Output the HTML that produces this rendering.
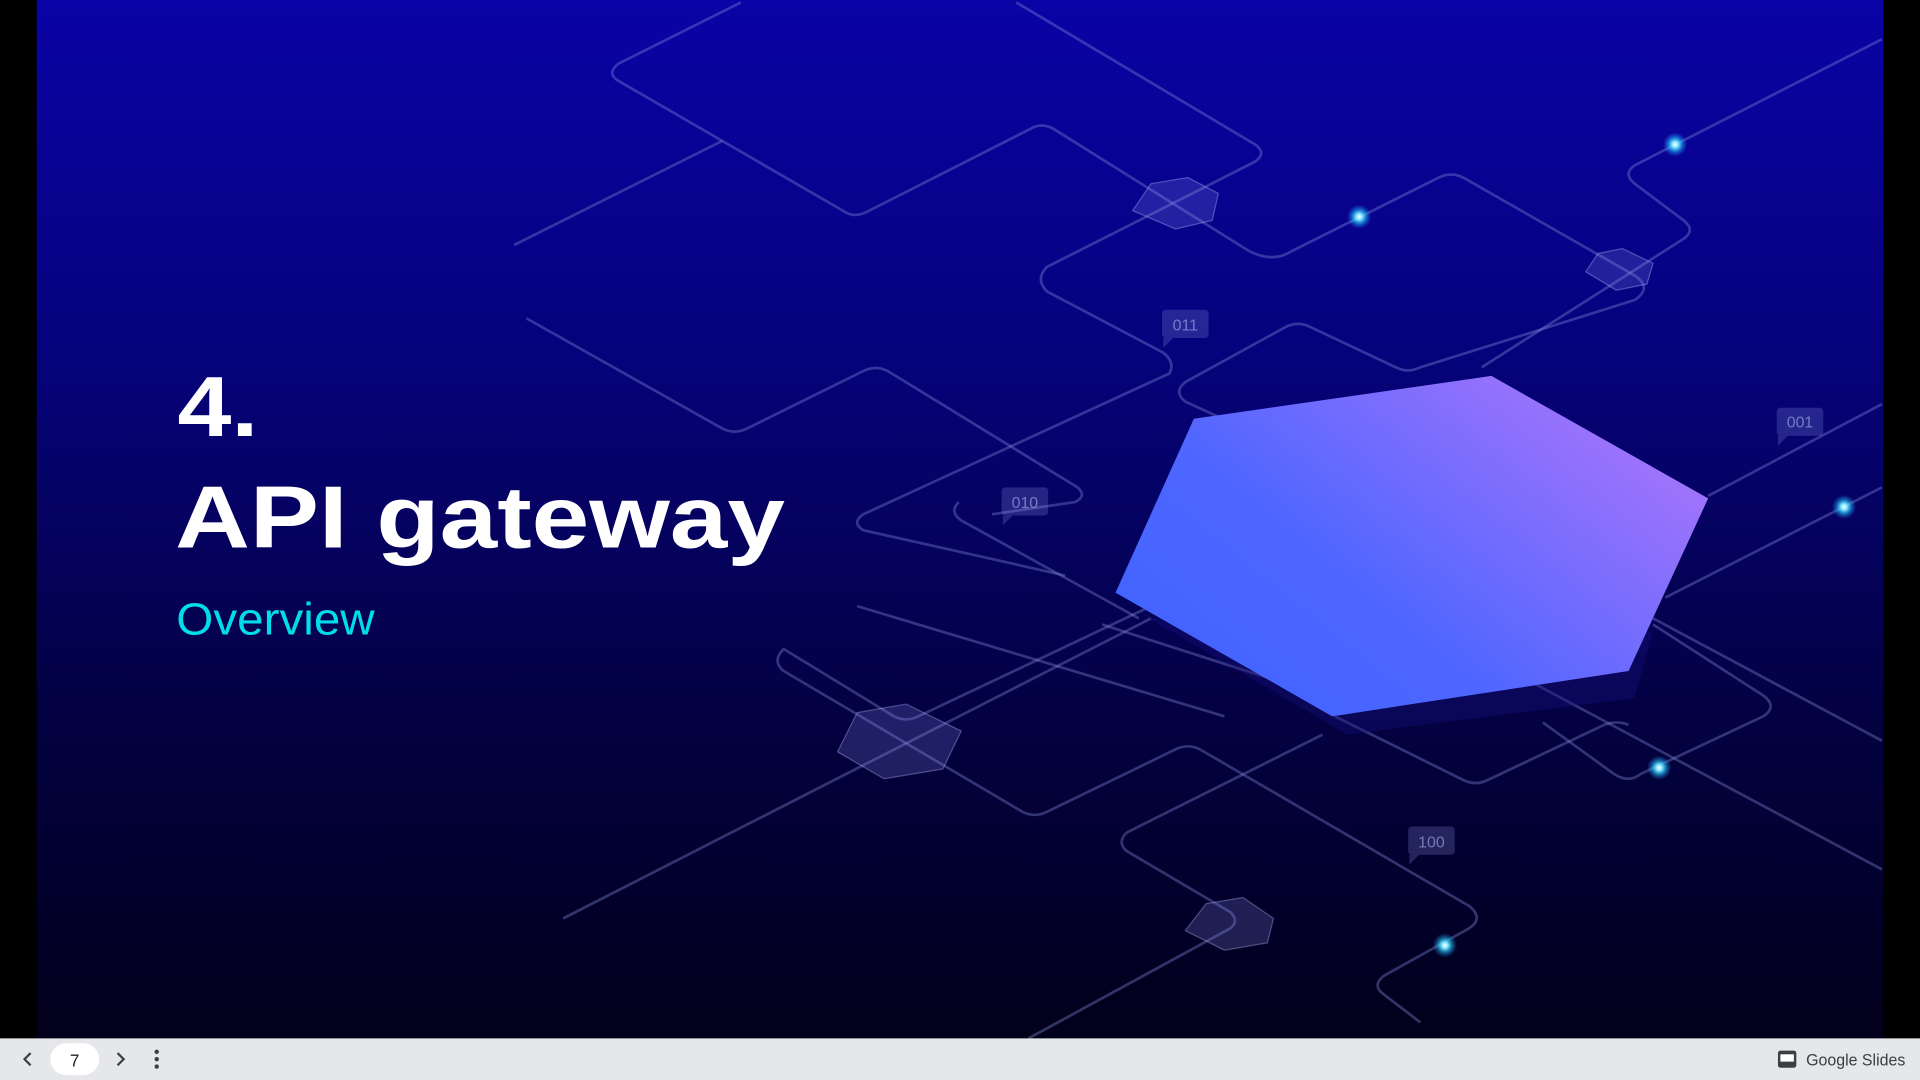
<!DOCTYPE html>
<html><head><meta charset="utf-8"><style>
html,body{margin:0;padding:0;width:1920px;height:1080px;overflow:hidden;background:#000}
svg{display:block}
</style></head><body>
<svg width="1920" height="1080" viewBox="0 0 1568 882" xmlns="http://www.w3.org/2000/svg">
<defs>
<linearGradient id="bg" x1="0" y1="0" x2="0" y2="1">
<stop offset="0" stop-color="#0a03a6"/>
<stop offset="0.35" stop-color="#06027a"/>
<stop offset="0.7" stop-color="#030140"/>
<stop offset="1" stop-color="#02001a"/>
</linearGradient>
<linearGradient id="hx" x1="0" y1="1" x2="1" y2="0.3">
<stop offset="0" stop-color="#3e63ff"/>
<stop offset="0.45" stop-color="#4e66ff"/>
<stop offset="1" stop-color="#a474fb"/>
</linearGradient>
<radialGradient id="gl">
<stop offset="0" stop-color="#ffffff"/>
<stop offset="0.25" stop-color="#7fe6ff"/>
<stop offset="0.6" stop-color="#1dc8ff" stop-opacity="0.5"/>
<stop offset="1" stop-color="#1d8cff" stop-opacity="0"/>
</radialGradient>
</defs>
<rect x="0" y="0" width="1568" height="882" fill="#000"/>
<rect x="30" y="0" width="1508" height="848" fill="url(#bg)"/>
<g fill="none" stroke="#8088d8" stroke-opacity="0.38" stroke-width="2.2" stroke-linejoin="round">
<path d="M605,2 L505,52 Q495,60 505,66 L690,173 Q698,178 708,173 L842,105 Q850,100 860,105 L1020,205 Q1040,215 1055,205 L1175,145 Q1185,140 1195,145 L1335,225 Q1350,235 1335,245 L1160,300 Q1150,305 1140,300 L1070,267 Q1060,262 1050,267 L968,312 Q958,320 968,328 L1005,345"/>
<path d="M830,2 L1025,118 Q1035,125 1025,132 L855,218 Q845,228 855,238 L950,288 Q960,296 955,305 L705,420 Q695,427 705,433 L870,470"/>
<path d="M1537,32 L1335,135 Q1325,142 1335,150 L1375,180 Q1385,188 1375,195 L1210,300"/>
<path d="M590,115 L420,200"/>
<path d="M880,398 Q888,405 878,410 L810,420"/>
<path d="M880,398 L725,303 Q715,298 705,303 L610,350 Q600,355 590,350 L430,260"/>
<path d="M783,410 Q775,418 785,425 L930,505"/>
<path d="M940,495 L750,585 Q740,590 730,585 L640,530 Q630,540 640,548 L835,663 Q845,668 855,663 L960,612 Q970,607 980,612 L1200,740 Q1212,750 1200,758 L1130,797 Q1120,805 1130,812 L1160,835"/>
<path d="M1537,330 L1395,405"/>
<path d="M1537,398 L1360,488"/>
<path d="M1537,605 L1350,505"/>
<path d="M1537,710 L1200,530"/>
<path d="M1350,510 L1440,568 Q1452,577 1440,585 L1340,632 Q1330,640 1318,632 L1260,590"/>
<path d="M1090,585 L1195,637 Q1205,642 1215,637 L1310,592 Q1320,588 1330,592"/>
<path d="M1000,585 L700,495"/>
<path d="M920,680 L1080,600"/>
<path d="M920,680 Q912,688 920,695 L1005,745 Q1012,752 1005,758 L840,848"/>
<path d="M460,750 L940,505"/>
<path d="M900,510 L1040,555"/>
</g>
<g fill="#8a8ef0" fill-opacity="0.22" stroke="#c0c4ff" stroke-opacity="0.35" stroke-width="1">
<polygon points="940,150 970,145 995,158 990,180 960,187 925,172"/>
<polygon points="1305,207 1325,203 1350,215 1345,232 1320,237 1295,222"/>
<polygon points="700,582 740,575 785,597 770,628 722,636 684,614"/>
<polygon points="985,738 1015,733 1040,750 1035,770 1000,776 968,760"/>
</g>
<g font-family="Liberation Sans, sans-serif" font-size="13" fill="#9aa0e0" fill-opacity="0.7">
<rect x="949" y="253" width="38" height="23" rx="3" fill="#8a90e0" fill-opacity="0.25"/><path d="M950,276 l0,8 l8,-8z" fill="#8a90e0" fill-opacity="0.25"/><text x="968" y="270" text-anchor="middle">011</text>
<rect x="818" y="398" width="38" height="23" rx="3" fill="#8a90e0" fill-opacity="0.25"/><path d="M819,421 l0,8 l8,-8z" fill="#8a90e0" fill-opacity="0.25"/><text x="837" y="415" text-anchor="middle">010</text>
<rect x="1451" y="333" width="38" height="23" rx="3" fill="#8a90e0" fill-opacity="0.25"/><path d="M1452,356 l0,8 l8,-8z" fill="#8a90e0" fill-opacity="0.25"/><text x="1470" y="349" text-anchor="middle">001</text>
<rect x="1150" y="675" width="38" height="23" rx="3" fill="#8a90e0" fill-opacity="0.25"/><path d="M1151,698 l0,8 l8,-8z" fill="#8a90e0" fill-opacity="0.25"/><text x="1169" y="692" text-anchor="middle">100</text>
</g>
<polygon points="930,500 1100,600 1335,570 1350,515 1100,560" fill="#1a1080" fill-opacity="0.35"/>
<polygon points="975,342 1218,307 1395,407 1330,548 1088,585 911,484" fill="url(#hx)"/>
<g>
<circle cx="1368" cy="118" r="10" fill="url(#gl)"/>
<circle cx="1110" cy="177" r="10" fill="url(#gl)"/>
<circle cx="1506" cy="414" r="10" fill="url(#gl)"/>
<circle cx="1355" cy="627" r="10" fill="url(#gl)"/>
<circle cx="1180" cy="772" r="10" fill="url(#gl)"/>
</g>
<g font-family="Liberation Sans, sans-serif" fill="#fff" font-weight="bold">
<text x="145" y="356" font-size="70" textLength="66" lengthAdjust="spacingAndGlyphs">4.</text>
<text x="143" y="447" font-size="72" textLength="498" lengthAdjust="spacingAndGlyphs">API gateway</text>
</g>
<text x="144" y="518" font-family="Liberation Sans, sans-serif" font-size="37" fill="#00dcea" textLength="162" lengthAdjust="spacingAndGlyphs">Overview</text>
<rect x="0" y="848" width="1568" height="34" fill="#e6e7ea"/>
<path d="M25,860 l-5,5 l5,5" fill="none" stroke="#3c4043" stroke-width="1.8"/>
<rect x="41" y="852" width="40" height="26" rx="13" fill="#fff"/>
<text x="61" y="871" font-family="Liberation Sans, sans-serif" font-size="14" fill="#202124" text-anchor="middle">7</text>
<path d="M96,860 l5,5 l-5,5" fill="none" stroke="#3c4043" stroke-width="1.8"/>
<circle cx="128" cy="859" r="1.8" fill="#3c4043"/><circle cx="128" cy="865" r="1.8" fill="#3c4043"/><circle cx="128" cy="871" r="1.8" fill="#3c4043"/>
<rect x="1452" y="858" width="15" height="14" rx="2" fill="#3c4043"/>
<rect x="1454" y="861" width="11" height="6" fill="#fff"/>
<text x="1475" y="870" font-family="Liberation Sans, sans-serif" font-size="13.5" fill="#3c4043" textLength="81" lengthAdjust="spacingAndGlyphs">Google Slides</text>
</svg>
</body></html>
